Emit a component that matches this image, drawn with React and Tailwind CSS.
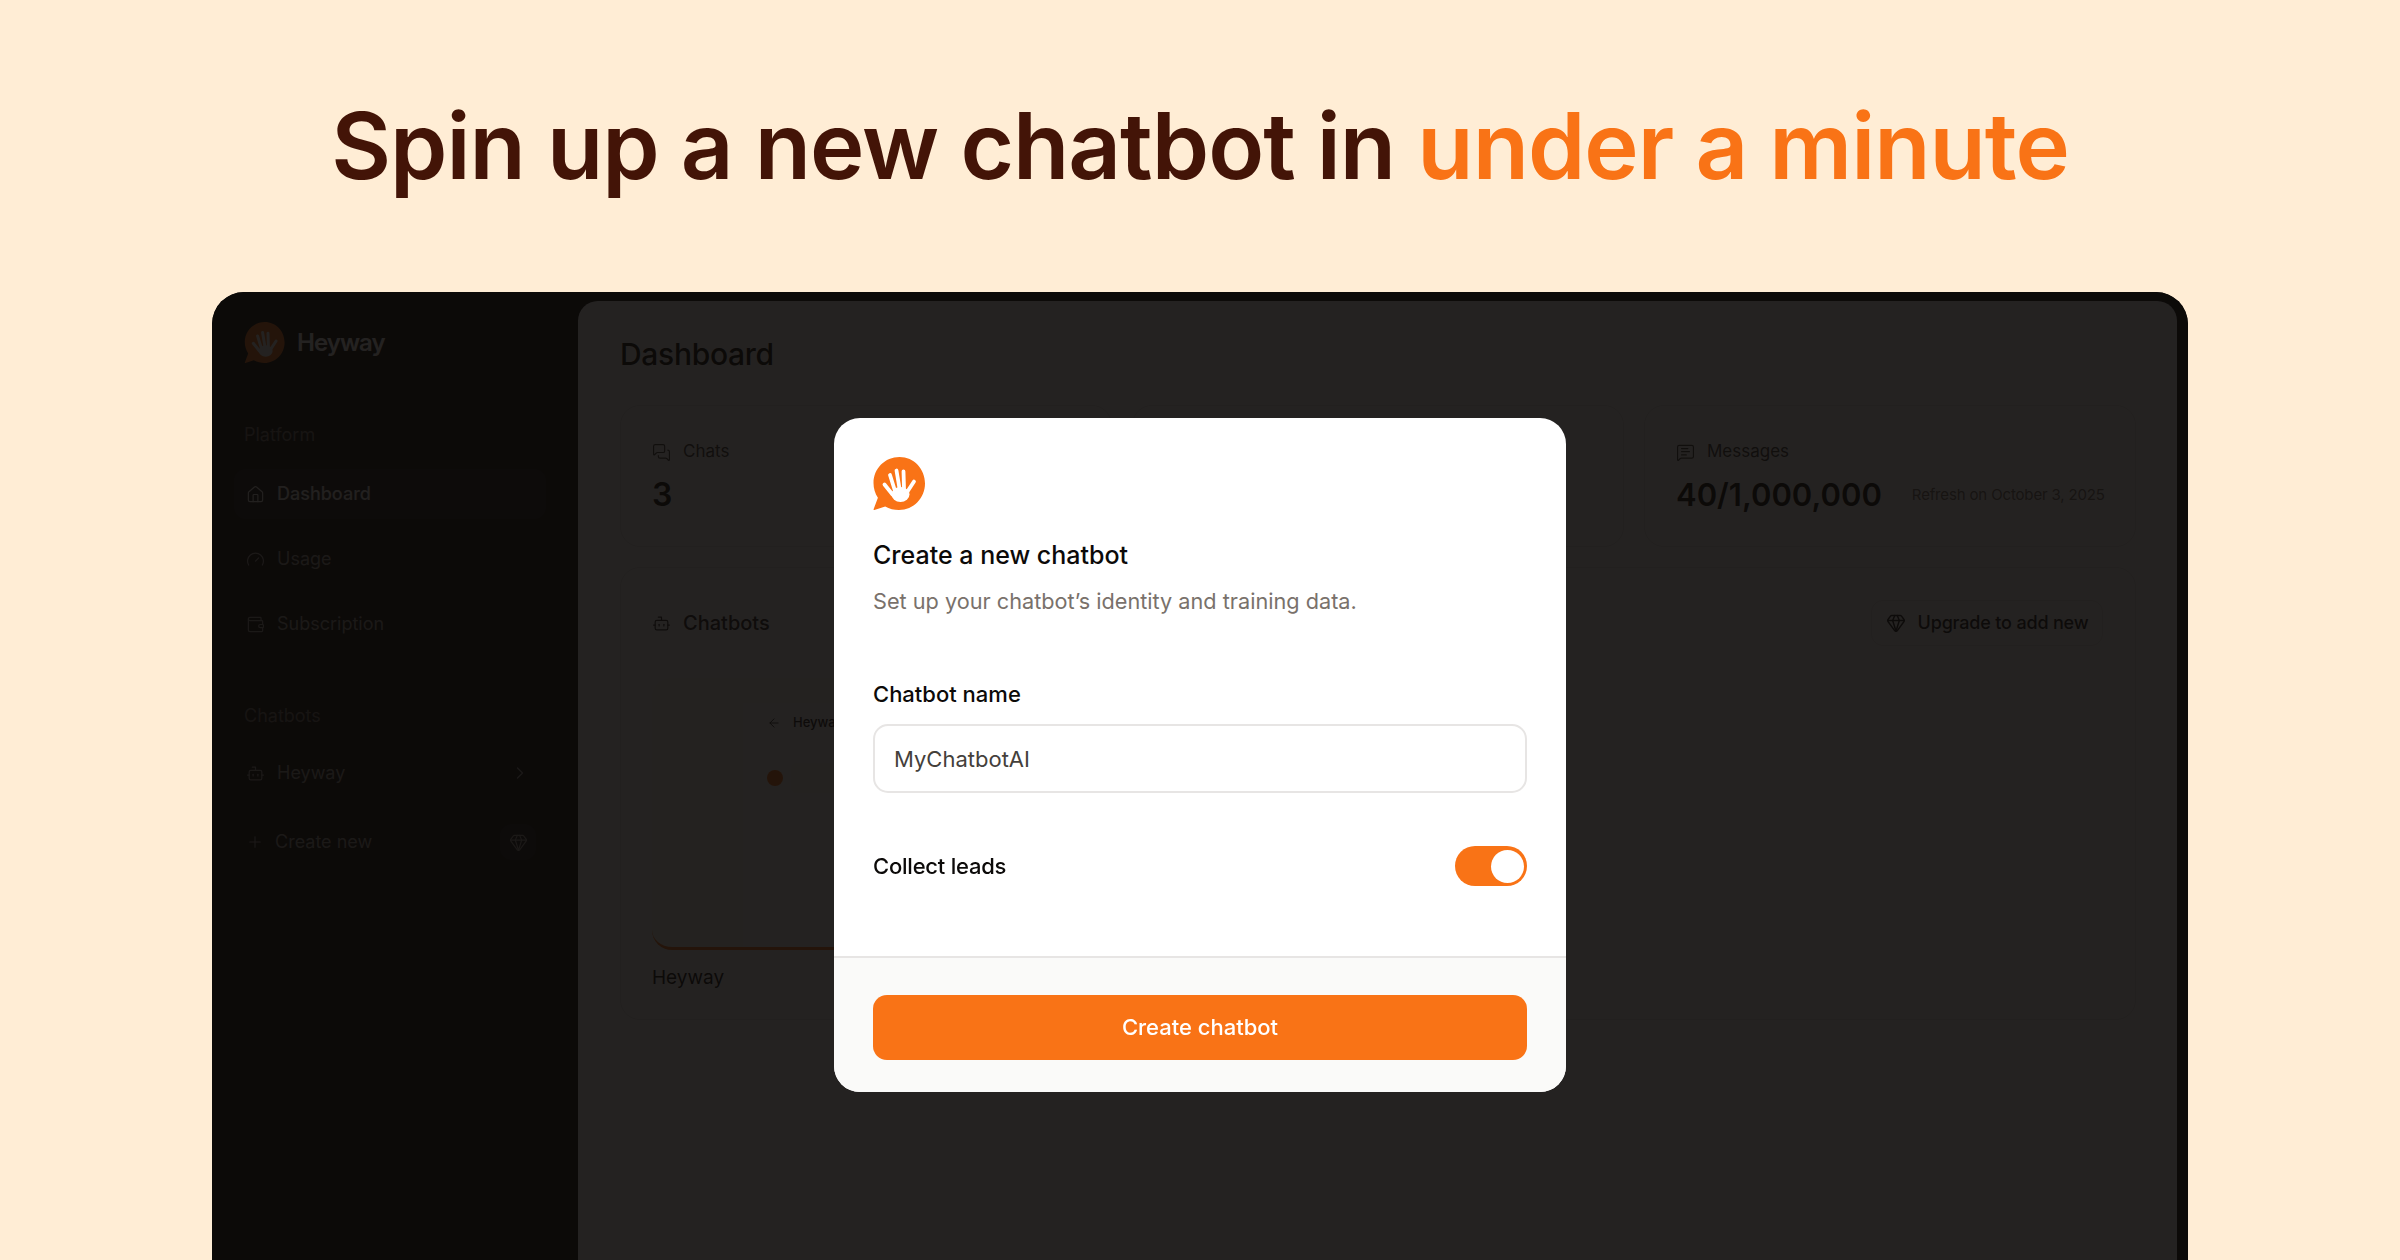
import { ArrowLeft, Bot, ChevronRight, Gauge, Gem, House, MessageSquareText, MessagesSquare, Plus, Wallet } from 'lucide-react';

const Logo = ({ className }) => (
  <svg className={className} viewBox="0 0 52 53" fill="none">
    <path d="M26.500 0C12 0 0.500 11.500 0.500 26c0 5.500 1.600 10.500 4.400 14.700L0.600 52.300c-0.200 0.500 0.300 0.900 0.800 0.700l10.800-3.600C16.300 51.700 21 53 26 53c14.500 0 26-12 26-26.500S41 0 26.500 0z" fill="#f97316" />
    <g stroke="#ffffff" strokeWidth="3.800" strokeLinecap="round">
      <path d="M11.500 27.500l8 10" />
      <path d="M17 18l5 16" />
      <path d="M23.500 13.500l3 18" />
      <path d="M30.500 14.500l0.500 17" />
      <path d="M41 24.500l-7.500 11.500" />
    </g>
    <ellipse cx="27.500" cy="37.500" rx="9" ry="7.500" fill="#ffffff" />
  </svg>
);

const NavItem = ({ icon: Icon, label, active }) => (
  <div className={`flex h-[50px] items-center gap-3 rounded-xl pl-3 text-lg ${active ? 'bg-[#1c1a18] font-medium text-stone-200' : 'text-stone-400'}`}>
    <Icon className="h-[19px] w-[19px]" strokeWidth={1.5} />
    <span>{label}</span>
  </div>
);

const Sidebar = () => (
  <aside className="flex w-[366px] shrink-0 flex-col pl-[22px] pr-8 pt-[30px]">
    <div className="flex items-center gap-3 pl-[10px]">
      <Logo className="h-[41px] w-[41px]" />
      <span className="text-2xl font-semibold tracking-[-0.04em] text-white">Heyway</span>
    </div>
    <p className="mt-[58px] pl-[10px] text-lg text-stone-500">Platform</p>
    <nav className="mt-5 flex flex-col gap-[15px]">
      <NavItem icon={House} label="Dashboard" active />
      <NavItem icon={Gauge} label="Usage" />
      <NavItem icon={Wallet} label="Subscription" />
    </nav>
    <p className="mt-[53px] pl-[10px] text-lg text-stone-500">Chatbots</p>
    <div className="mt-[18px] flex h-[50px] items-center gap-3 pl-3 pr-4 text-lg text-stone-400">
      <Bot className="h-[19px] w-[19px]" strokeWidth={1.5} />
      <span className="flex-1">Heyway</span>
      <ChevronRight className="h-5 w-5" strokeWidth={1.5} />
    </div>
    <div className="mt-[19px] flex h-[50px] items-center gap-[11px] pl-3 pr-[10px] text-lg text-stone-400">
      <Plus className="h-[18px] w-[18px]" strokeWidth={1.5} />
      <span className="flex-1">Create new</span>
      <div className="flex h-9 w-9 items-center justify-center rounded-xl bg-[#1c1a18]">
        <Gem className="h-[19px] w-[19px]" strokeWidth={1.5} />
      </div>
    </div>
  </aside>
);

const StatCard = ({ children }) => (
  <div className="h-[142px] rounded-[20px] border border-stone-200 pl-[31px] pt-[34px]">{children}</div>
);

const Dashboard = () => (
  <main className="mr-[11px] mt-[9px] flex-1 overflow-hidden rounded-t-[20px] bg-white pl-[42px] pr-[41px] pt-[35px]">
    <h2 className="text-[30px] leading-[36px] font-medium tracking-[-0.01em] text-stone-950">Dashboard</h2>
    <div className="mt-[33px] grid grid-cols-3 gap-5">
      <StatCard>
        <div className="flex h-6 items-center gap-3 text-[17px] text-stone-700">
          <MessagesSquare className="h-[19px] w-[19px]" strokeWidth={1.5} />
          <span>Chats</span>
        </div>
        <p className="mt-[11px] text-[32px] leading-10 font-semibold text-stone-950">3</p>
      </StatCard>
      <StatCard />
      <StatCard>
        <div className="flex h-6 items-center gap-3 text-[17px] text-stone-700">
          <MessageSquareText className="h-[19px] w-[19px]" strokeWidth={1.5} />
          <span>Messages</span>
        </div>
        <div className="mt-[11px] flex items-center gap-[30px]">
          <p className="text-[31px] leading-10 font-semibold text-stone-950">40/1,000,000</p>
          <span className="whitespace-nowrap text-[15px] tracking-[-0.01em] text-stone-500">Refresh on October 3, 2025</span>
        </div>
      </StatCard>
    </div>
    <section className="mt-5 h-[453px] rounded-[20px] border border-stone-200 pl-[31px] pr-8 pt-8">
      <div className="flex h-[46px] items-center justify-between">
        <div className="flex items-center gap-3 text-xl font-medium text-stone-800">
          <Bot className="h-[19px] w-[19px]" strokeWidth={1.5} />
          <span>Chatbots</span>
        </div>
        <div className="flex h-[46px] w-[232px] items-center justify-center gap-3 rounded-xl border border-stone-200 text-lg font-medium text-stone-900">
          <Gem className="h-5 w-5" strokeWidth={1.75} />
          <span className="tracking-[-0.01em]">Upgrade to add new</span>
        </div>
      </div>
      <div className="mt-8 flex h-[272px] w-[560px] overflow-hidden rounded-[20px] border-b-[3px] border-[#f97316] bg-orange-50">
        <div className="w-[91px] shrink-0" />
        <div className="mt-[25px] flex-1 bg-stone-50 pl-6 pt-[10px]">
          <div className="flex items-center gap-3 text-[13px] font-medium text-stone-900">
            <ArrowLeft className="h-[14px] w-[14px]" strokeWidth={1.5} />
            <span>Heyway</span>
          </div>
          <div className="mt-[30px] flex items-center gap-2">
            <span className="h-4 w-4 rounded-full bg-[#f97316]" />
            <span className="h-[30px] w-[140px] rounded-md bg-orange-50" />
          </div>
        </div>
      </div>
      <p className="mt-[14px] text-[19px] text-stone-950">Heyway</p>
    </section>
  </main>
);

const CreateModal = () => (
  <div className="flex h-[674px] w-[732px] flex-col overflow-hidden rounded-[26px] bg-white">
    <div className="flex-1 px-[39px] pt-[39px]">
      <Logo className="h-[53px] w-[52px]" />
      <h3 className="mt-[29px] text-[25px] leading-8 font-medium text-stone-950">Create a new chatbot</h3>
      <p className="mt-[14px] text-[21.7px] leading-8 text-stone-500">Set up your chatbot’s identity and training data.</p>
      <label className="mt-[61px] block text-[22px] leading-8 font-medium text-stone-950">Chatbot name</label>
      <input
        readOnly
        value="MyChatbotAI"
        className="mt-[14px] h-[69px] w-full rounded-[15px] border-2 border-stone-200 px-[19px] text-[22px] text-stone-700 outline-none"
      />
      <div className="mt-[53px] flex items-center justify-between">
        <span className="text-[22px] font-medium tracking-[-0.01em] text-stone-950">Collect leads</span>
        <div className="flex h-10 w-[72px] items-center justify-end rounded-full bg-[#f97316] pr-[3px]">
          <span className="h-[33px] w-[33px] rounded-full bg-white" />
        </div>
      </div>
    </div>
    <div className="flex h-[136px] items-start border-t-2 border-stone-200 bg-stone-50 px-[39px] pt-[37px]">
      <button className="h-[65px] w-full rounded-[14px] bg-[#f97316] text-[22px] font-medium text-white">Create chatbot</button>
    </div>
  </div>
);

const App = () => (
  <div className="flex h-screen flex-col overflow-hidden bg-[#ffedd5] font-['Inter',sans-serif]">
    <h1 className="h-[292px] shrink-0 pt-[92px] text-center text-[92px] leading-[108px] font-semibold tracking-[-0.011em] text-[#431407]">
      Spin up a new chatbot in <span className="text-[#f97316]">under a minute</span>
    </h1>
    <div className="relative mx-[212px] flex flex-1 overflow-hidden rounded-t-[32px] bg-stone-950">
      <Sidebar />
      <Dashboard />
      <div className="absolute inset-0 flex justify-center bg-stone-950/90 pt-[126px] backdrop-blur-[0.5px]">
        <CreateModal />
      </div>
    </div>
  </div>
);

export default App;
